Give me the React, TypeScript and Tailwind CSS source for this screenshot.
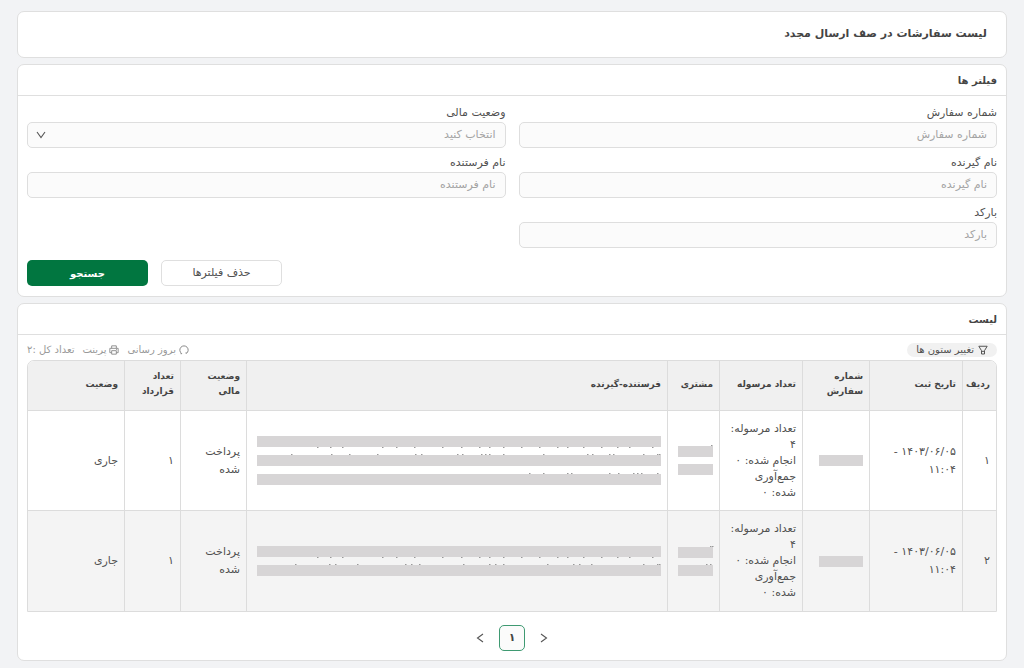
import React, { useId, useState } from "react";

type Speck = number;

interface Bar {
  top: string;
  above?: Speck[];
  below?: Speck[];
}

interface Order {
  index: string;
  number: Bar[];
  customer: Bar[];
  parties: Bar[];
}

const SPECKS_BELOW = [60, 73, 85, 125, 139, 157, 185, 204, 222, 232, 246, 264, 282, 300, 310, 326, 344, 360, 372, 395];
const SPECKS_ABOVE = [34, 74, 92, 120, 158, 164, 200, 205, 224, 228, 232, 246, 286, 330, 335, 352, 356, 386, 400, 402];

const orders: Order[] = [
  {
    index: "۱",
    number: [{ top: "mt-0" }],
    customer: [{ top: "mt-0", above: [33] }, { top: "mt-[7px]" }],
    parties: [
      { top: "mt-0", below: SPECKS_BELOW },
      { top: "mt-2", above: SPECKS_ABOVE },
      { top: "mt-2", above: [272, 286, 310, 314, 352, 361, 376, 380, 384, 400] },
    ],
  },
  {
    index: "۲",
    number: [{ top: "mt-0" }],
    customer: [{ top: "mt-0", above: [32, 34] }, { top: "mt-[7px]", above: [28, 32] }],
    parties: [
      { top: "mt-0", below: SPECKS_BELOW },
      { top: "mt-2", above: [38, 72, 78, 100, 148, 154, 162, 206, 232, 238, 246, 290, 316, 322, 334, 386, 400, 402] },
    ],
  },
];

const headings = [
  "ردیف",
  "تاریخ ثبت",
  "شماره سفارش",
  "تعداد مرسوله",
  "مشتری",
  "فرستنده-گیرنده",
  "وضعیت مالی",
  "تعداد قرارداد",
  "وضعیت",
];

const labelClass = "flex h-6 items-center pt-[6px] text-[11px] text-[#505050]";

const inputClass =
  "block h-[26px] w-full rounded-[5px] border border-[#dedede] bg-[#fbfbfb] px-[9px] pb-[2px] text-[11px] text-[#555] outline-none placeholder:text-[#a3a3a3] focus:border-[#017640]";

function Field({ label }: { label: string }) {
  const id = useId();
  return (
    <div>
      <label htmlFor={id} className={labelClass}>
        {label}
      </label>
      <input id={id} type="text" placeholder={label} className={inputClass} />
    </div>
  );
}

function SelectField({ label }: { label: string }) {
  const id = useId();
  return (
    <div>
      <label htmlFor={id} className={labelClass}>
        {label}
      </label>
      <div className="relative">
        <select
          id={id}
          defaultValue=""
          className="block h-[26px] w-full appearance-none rounded-[5px] border border-[#dedede] bg-[#fbfbfb] px-[9px] text-[11px] text-[#a3a3a3] outline-none focus:border-[#017640]"
        >
          <option value="">انتخاب کنید</option>
        </select>
        <svg
          viewBox="0 0 10 8"
          className="pointer-events-none absolute top-[9px] left-[9px] h-2 w-[10px]"
          fill="none"
          stroke="#555"
          strokeWidth="1.1"
        >
          <path d="M1 1l4 5.5L9 1" />
        </svg>
      </div>
    </div>
  );
}

function Card({ title, children }: { title: string; children: React.ReactNode }) {
  return (
    <section className="rounded-[7px] border border-[#dfdfdf] bg-white">
      <h2 className="flex h-[31px] items-center border-b border-[#dfdfdf] px-[9px] text-[10px] font-bold text-[#444]">
        {title}
      </h2>
      {children}
    </section>
  );
}

function Specks({ at, y }: { at: Speck[]; y: "above" | "below" }) {
  return (
    <svg
      className={
        y === "above"
          ? "absolute bottom-full left-0 h-[2px] w-full overflow-visible"
          : "absolute top-full left-0 h-[2px] w-full overflow-visible"
      }
      fill="#999"
    >
      {at.map((x) => (
        <rect key={x} x={x} y={y === "above" ? 1 : 0} width="1.5" height="1" />
      ))}
    </svg>
  );
}

function Bars({ bars }: { bars: Bar[] }) {
  return (
    <>
      {bars.map((bar, i) => (
        <div key={i} className={`relative h-[11px] bg-[#d7d5d6] ${bar.top}`}>
          {bar.above && <Specks at={bar.above} y="above" />}
          {bar.below && <Specks at={bar.below} y="below" />}
        </div>
      ))}
    </>
  );
}

function FilterIcon() {
  return (
    <svg viewBox="0 0 12 12" className="size-[10px]" fill="none" stroke="#555" strokeWidth="1.2" strokeLinejoin="round">
      <path d="M1 1.5h10L7.8 6.8v4H4.2v-4zM4.2 7.6h3.6" />
    </svg>
  );
}

function ReloadIcon() {
  return (
    <svg viewBox="0 0 12 12" className="size-[10px]" fill="none" stroke="#8a8a8a" strokeWidth="1.2">
      <path d="M3.2 10.2A5 5 0 1 1 8.8 10.2M1.8 10.4h1.8M8.6 8.6v1.8" />
    </svg>
  );
}

function PrintIcon() {
  return (
    <svg viewBox="0 0 12 12" className="size-[10px]" fill="none" stroke="#8a8a8a" strokeWidth="1.1" strokeLinejoin="round">
      <path d="M3.2 4V1h5.6v3M3.2 9.2H1V4h10v5.2H8.8M3.2 6.8h5.6V11H3.2zM8.4 5.4h1" />
    </svg>
  );
}

function OrdersTable() {
  return (
    <div className="overflow-hidden rounded-t-[7px] border border-[#dcdcdc]">
      <table className="w-full table-fixed border-separate border-spacing-0 text-[#505050]">
        <colgroup>
          <col className="w-[34px]" />
          <col className="w-[93px]" />
          <col className="w-[67px]" />
          <col className="w-[83px]" />
          <col className="w-[52px]" />
          <col />
          <col className="w-[66px]" />
          <col className="w-[56px]" />
          <col className="w-[96px]" />
        </colgroup>
        <thead>
          <tr className="h-[50px] bg-[#f0f0f0]">
            {headings.map((h) => (
              <th
                key={h}
                scope="col"
                className="border-b border-l border-[#dcdcdc] px-[6px] pb-[3px] text-right text-[9px] leading-[15px] font-bold text-[#444] last:border-l-0"
              >
                {h}
              </th>
            ))}
          </tr>
        </thead>
        <tbody className="[&_td]:border-l [&_td]:border-[#dcdcdc] [&_td]:px-[6px] [&_td:last-child]:border-l-0 [&_tr:first-child_td]:border-b">
          {orders.map((o) => (
            <tr key={o.index} className="h-[100px] text-[11px] leading-[18px] even:bg-[#f4f4f4]">
              <td>{o.index}</td>
              <td>
                <bdo dir="rtl" className="block">
                  <bdi dir="ltr">۱۴۰۳/۰۶/۰۵</bdi> -
                </bdo>
                <bdi dir="ltr">۱۱:۰۴</bdi>
              </td>
              <td>
                <div className="ml-[10px]">
                  <Bars bars={o.number} />
                </div>
              </td>
              <td className="leading-4">
                <p>
                  تعداد مرسوله:
                  <br />۴
                </p>
                <p>انجام شده: ۰</p>
                <p>
                  جمع‌آوری
                  <br />
                  شده: ۰
                </p>
              </td>
              <td>
                <div className="ml-1">
                  <Bars bars={o.customer} />
                </div>
              </td>
              <td>
                <div className="ml-1">
                  <Bars bars={o.parties} />
                </div>
              </td>
              <td>پرداخت شده</td>
              <td>۱</td>
              <td>جاری</td>
            </tr>
          ))}
        </tbody>
      </table>
    </div>
  );
}

function Chevron({ d }: { d: string }) {
  return (
    <svg viewBox="0 0 8 10" className="h-[10px] w-2" fill="none" stroke="#555" strokeWidth="1.1">
      <path d={d} />
    </svg>
  );
}

export default function App() {
  const [page] = useState("۱");
  return (
    <main
      dir="rtl"
      className="flex min-h-screen flex-col gap-[6px] bg-[#f2f3f5] px-[17px] pt-[11px] pb-[7px] font-['DejaVu_Sans',sans-serif]"
    >
      <header className="flex h-[47px] items-center rounded-[7px] border border-[#dfdfdf] bg-white px-[19px]">
        <h1 className="text-[11px] font-bold text-[#444]">لیست سفارشات در صف ارسال مجدد</h1>
      </header>

      <Card title="فیلتر ها">
        <form className="px-[9px] pt-[2px] pb-[10px]" onSubmit={(e) => e.preventDefault()}>
          <div className="grid grid-cols-2 gap-x-[13px]">
            <Field label="شماره سفارش" />
            <SelectField label="وضعیت مالی" />
            <Field label="نام گیرنده" />
            <Field label="نام فرستنده" />
            <Field label="بارکد" />
          </div>
          <div className="mt-3 flex justify-end gap-[13px]">
            <button
              type="reset"
              className="h-[26px] w-[121px] rounded-[5px] border border-[#dfdfdf] bg-white text-[11px] text-[#505050]"
            >
              حذف فیلترها
            </button>
            <button type="submit" className="h-[26px] w-[121px] rounded-[5px] bg-[#017640] text-[10px] font-bold text-white">
              جستجو
            </button>
          </div>
        </form>
      </Card>

      <Card title="لیست">
        <div className="px-[9px] pt-2 pb-[9px]">
          <div className="flex h-[17px] items-start justify-between text-[10px] leading-[14px]">
            <button
              type="button"
              className="flex h-[14px] items-center gap-1 rounded-full bg-[#f1f1f1] px-[9px] text-[#505050]"
            >
              <FilterIcon />
              تغییر ستون ها
            </button>
            <div className="flex gap-2 text-[#999]">
              <button type="button" className="flex items-center gap-[3px]">
                <ReloadIcon />
                بروز رسانی
              </button>
              <button type="button" className="flex items-center gap-[3px]">
                <PrintIcon />
                پرینت
              </button>
              <span>تعداد کل :۲</span>
            </div>
          </div>
          <OrdersTable />
          <nav aria-label="صفحه‌بندی" className="mt-[13px] flex items-center justify-center gap-[6px]">
            <button type="button" aria-label="صفحه قبل" className="flex size-[26px] items-center justify-center">
              <Chevron d="M1 1l5.5 4L1 9" />
            </button>
            <button
              type="button"
              aria-current="page"
              className="flex size-[26px] items-center justify-center rounded-[5px] border border-[#3f9a72] bg-[#fbfbfb] text-[11px] font-bold text-[#444]"
            >
              {page}
            </button>
            <button type="button" aria-label="صفحه بعد" className="flex size-[26px] items-center justify-center">
              <Chevron d="M7 1L1.5 5 7 9" />
            </button>
          </nav>
        </div>
      </Card>
    </main>
  );
}
